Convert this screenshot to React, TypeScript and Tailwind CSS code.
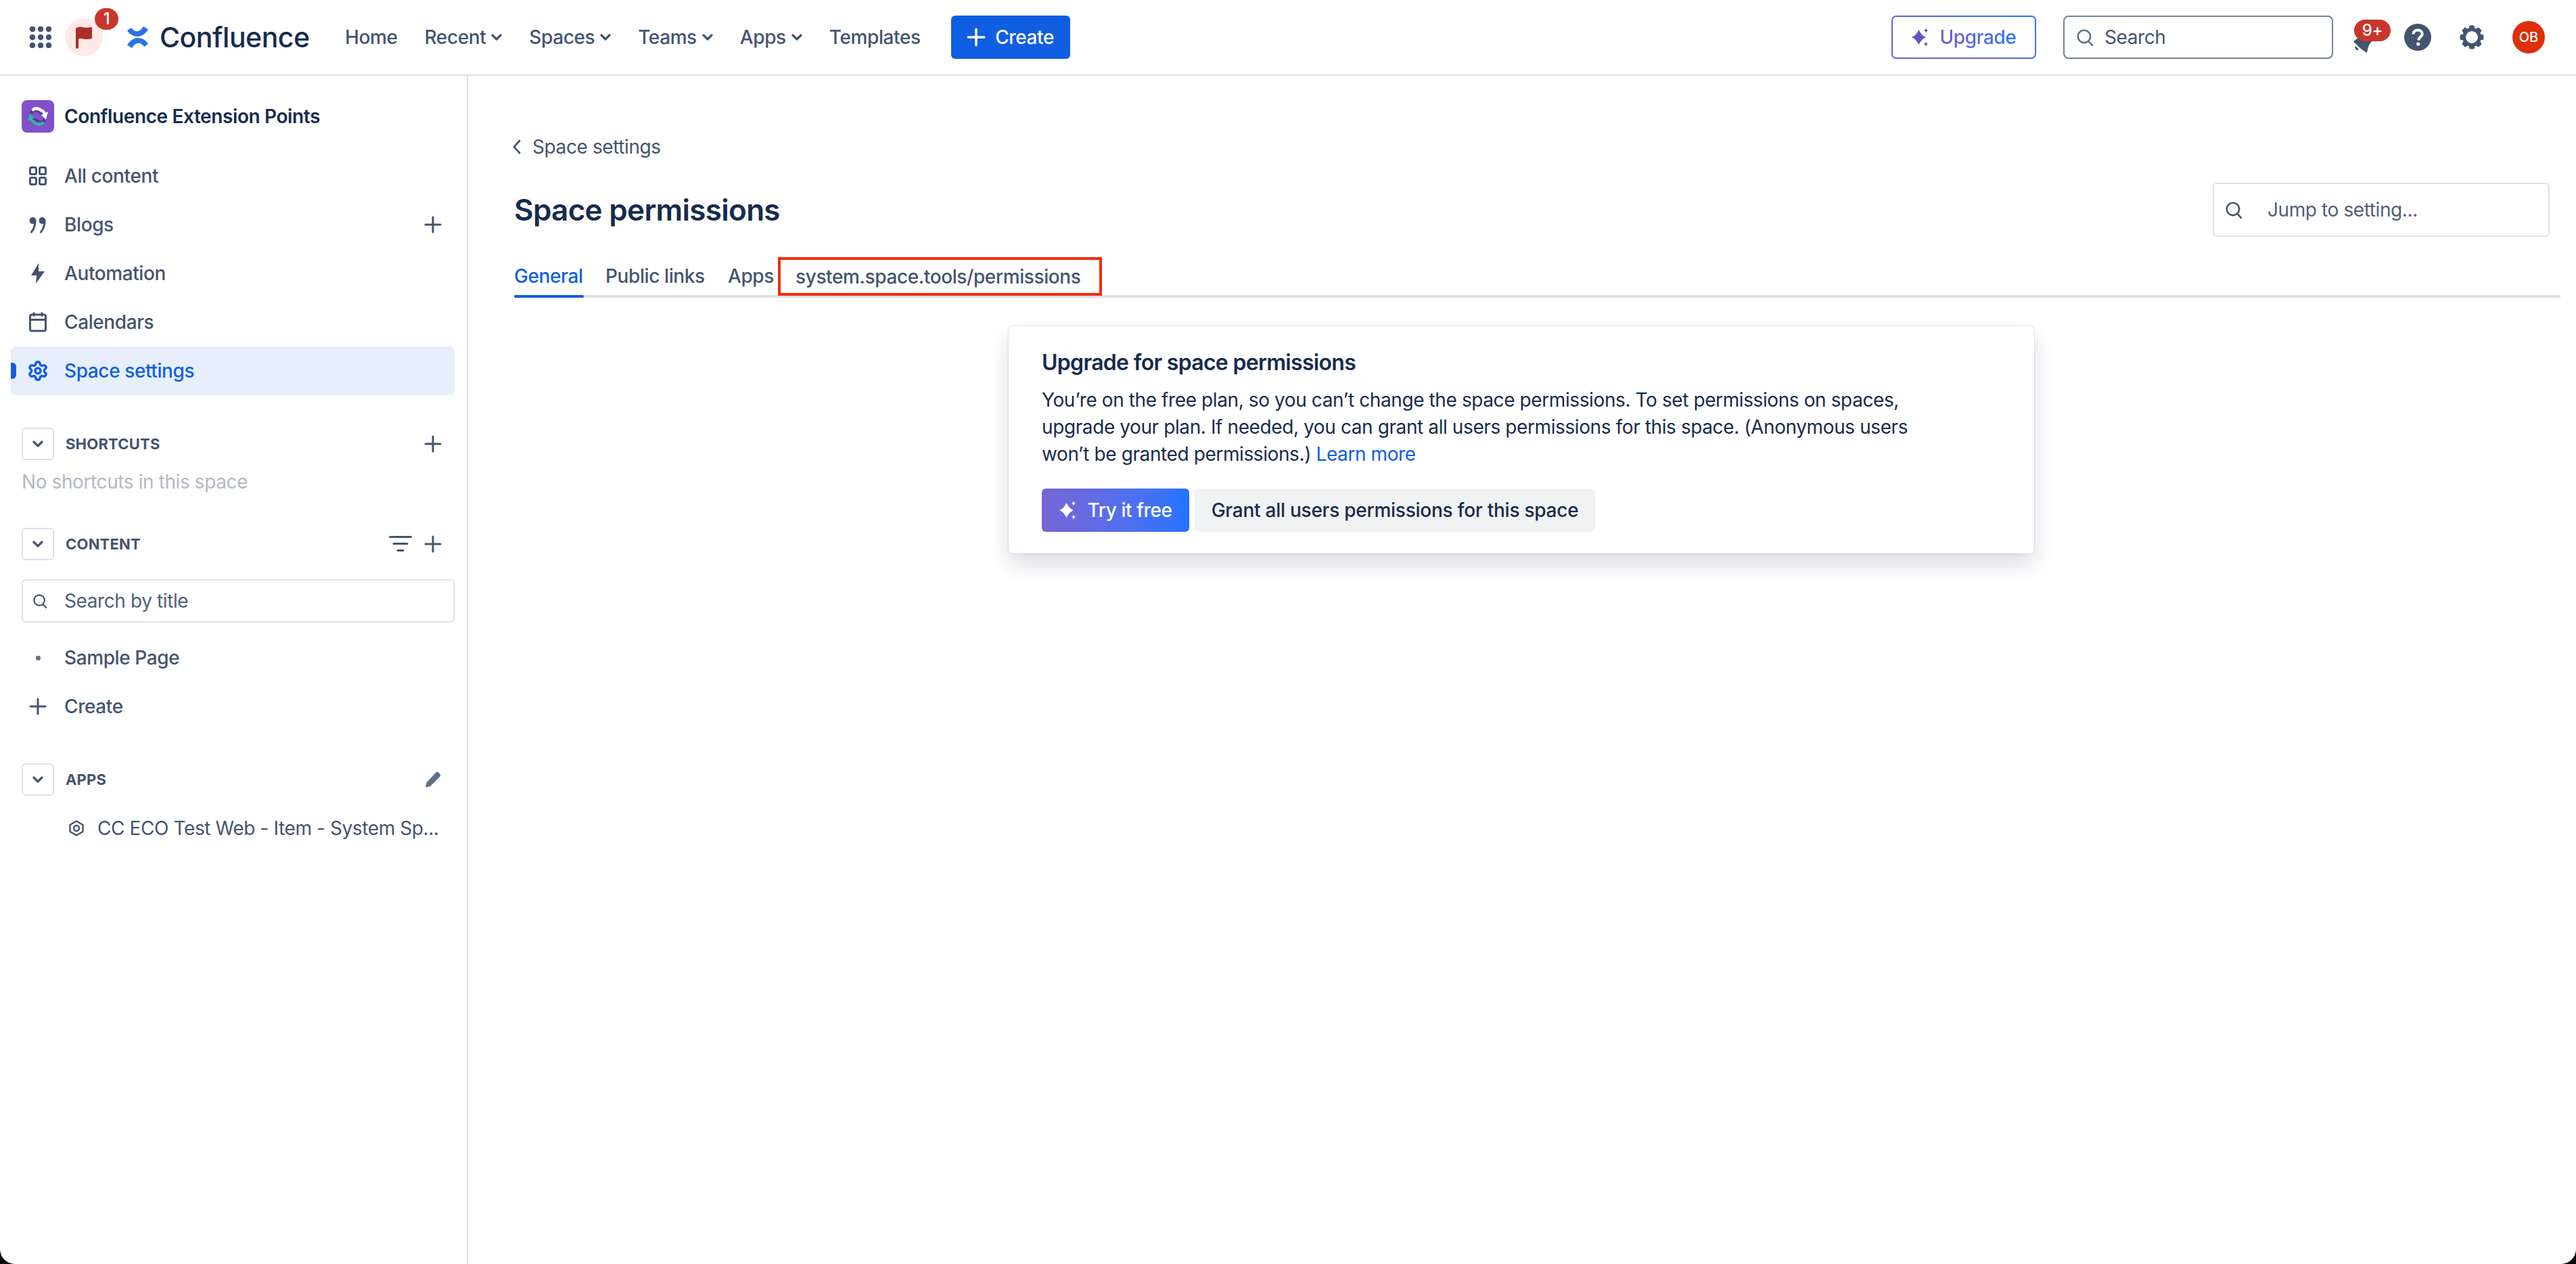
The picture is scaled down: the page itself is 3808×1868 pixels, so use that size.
import type { ReactNode } from 'react';
import { Settings } from 'lucide-react';

function PlusIcon({ className = 'h-[32px] w-[32px] text-[#44546f]' }: { className?: string }) {
  return (
    <svg viewBox="0 0 32 32" fill="none" stroke="currentColor" strokeWidth="3" strokeLinecap="round" className={className}>
      <path d="M16 5v22M5 16h22" />
    </svg>
  );
}

function ChevronDown({ className = 'h-[16px] w-[16px] text-[#44546f]' }: { className?: string }) {
  return (
    <svg viewBox="0 0 16 16" fill="none" stroke="currentColor" strokeWidth="3.2" strokeLinecap="round" strokeLinejoin="round" className={className}>
      <path d="M2 5 8 11l6-6" />
    </svg>
  );
}

function SearchIcon({ className }: { className?: string }) {
  return (
    <svg viewBox="0 0 24 24" fill="none" stroke="currentColor" strokeWidth="2.4" strokeLinecap="round" className={className}>
      <circle cx="11" cy="11" r="8.5" />
      <path d="m17 17.5 5 5.5" />
    </svg>
  );
}

function Sparkles({ className }: { className?: string }) {
  return (
    <svg viewBox="0 0 28 28" fill="currentColor" className={className}>
      <path d="M10.500 3C13 8 16 12 21 14 16 16 13 20 10.500 25 8 20 5 16 0 14 5 12 8 8 10.500 3z" />
      <path d="M21 0c.5 2.600 1.300 3.500 3.500 4-2.200.5-3 1.400-3.500 4-.5-2.600-1.300-3.500-3.500-4C19.700 3.500 20.500 2.600 21 0z" />
      <path d="M21 20c.5 2.600 1.300 3.500 3.500 4-2.200.5-3 1.400-3.500 4-.5-2.600-1.300-3.500-3.500-4 2.200-.5 3-1.400 3.500-4z" />
    </svg>
  );
}

function Gear({ className }: { className?: string }) {
  return (
    <svg viewBox="0 0 36 36" fill="currentColor" className={className}>
      <circle cx="18" cy="18" r="11.500" fill="none" stroke="currentColor" strokeWidth="5" />
      {[0, 45, 90, 135, 180, 225, 270, 315].map((a) => (
        <rect key={a} x="14" y="0.500" width="8" height="7" rx="2" transform={`rotate(${a} 18 18)`} />
      ))}
    </svg>
  );
}

function NavItem({ label, caret }: { label: string; caret?: boolean }) {
  return (
    <div className="flex items-center gap-[8px] text-[28px] font-medium text-[#44546f]">
      <span>{label}</span>
      {caret && <ChevronDown />}
    </div>
  );
}

function TopBar() {
  return (
    <header className="flex h-[112px] shrink-0 items-center border-b-2 border-[#dfe1e6] pl-[43px] pr-[46px]">
      <svg viewBox="0 0 33 32" fill="#44546f" className="h-[32px] w-[33px]">
        {[5, 17, 29].flatMap((cx) =>
          [4, 16, 28].map((cy) => <circle key={`${cx}-${cy}`} cx={cx} cy={cy} r="4.300" />),
        )}
      </svg>
      <div className="relative ml-[20px] flex h-[56px] w-[56px] items-center justify-center rounded-full bg-[#ffe9e7]">
        <svg viewBox="0 0 24 33" fill="#ae2e24" className="h-[33px] w-[24px]">
          <path d="M0 3C3 .8 6 .5 10 1.200c4 .8 8 1 13-.2.700 0 1 .4 1 1v15c0 .6-.2 1-.8 1.200-4.200 1.100-8.200 1-12.200.2-3.500-.6-5.500-.5-7 .2V31a2 2 0 0 1-4 0z" />
        </svg>
        <span className="absolute -top-[15px] left-[44px] flex h-[32px] w-[35px] items-center justify-center rounded-full bg-[#c9372c] text-[24px] font-medium text-white">
          1
        </span>
      </div>
      <svg viewBox="0 0 33 32" fill="#2b72e8" className="ml-[35px] h-[32px] w-[33px]">
        <path d="M1 6 7 2c3 4 6 6 10 5 4-1 6-4 8-7l7 4.500C29 9 25 14 17 15 10 15.500 4 11 1 6z" />
        <path d="M32 26l-6 4c-3-4-6-6-10-5-4 1-6 4-8 7L1 27.500C4 23 8 18 16 17c7-.5 13 4 16 9z" />
      </svg>
      <span className="ml-[16px] w-[220px] text-[41px] font-medium leading-none tracking-[-0.5px] text-[#172b4d]">
        Confluence
      </span>
      <nav className="ml-[54px] flex items-center gap-[40px]">
        <NavItem label="Home" />
        <NavItem label="Recent" caret />
        <NavItem label="Spaces" caret />
        <NavItem label="Teams" caret />
        <NavItem label="Apps" caret />
        <NavItem label="Templates" />
      </nav>
      <button className="ml-[45px] flex h-[64px] w-[176px] items-center justify-center gap-[14px] rounded-[6px] bg-[#105ee2] text-[28px] font-medium text-white">
        <svg viewBox="0 0 24 24" fill="none" stroke="currentColor" strokeWidth="3" strokeLinecap="round" className="h-[28px] w-[28px]">
          <path d="M12 2v20M2 12h20" />
        </svg>
        Create
      </button>

      <div className="ml-auto flex items-center">
        <div className="rounded-[7px] bg-gradient-to-tr from-[#6f5bd0] to-[#1f74ff] p-[2px]">
          <div className="flex h-[60px] w-[210px] items-center justify-center gap-[14px] rounded-[5px] bg-white">
            <Sparkles className="h-[28px] w-[28px] text-[#6554c0]" />
            <span className="bg-gradient-to-r from-[#6f5bd0] to-[#1f74ff] bg-clip-text text-[28px] font-medium text-transparent">
              Upgrade
            </span>
          </div>
        </div>
        <div className="ml-[40px] flex h-[64px] w-[399px] items-center gap-[16px] rounded-[8px] border-2 border-[#758195] pl-[17px]">
          <SearchIcon className="h-[26px] w-[26px] text-[#626f86]" />
          <span className="text-[28px] text-[#44546f]">Search</span>
        </div>
        <div className="relative ml-[28px] h-[52px] w-[60px]">
          <svg viewBox="0 0 34 26" fill="#44546f" className="absolute left-0 top-[24px] h-[26px] w-[34px]">
            <path d="M2 8 12 1l20 6c-5 2-8 6-10 18-6-3-12-8-20-17z" />
            <path d="M5 15l5 5-3 1.500-3-4z" />
          </svg>
          <span className="absolute left-[3px] top-0 flex h-[32px] w-[54px] items-center justify-center rounded-full bg-[#c9372c] text-[24px] font-medium text-white">
            9+
          </span>
        </div>
        <svg viewBox="0 0 40 40" className="ml-[17px] h-[40px] w-[40px]">
          <circle cx="20" cy="20" r="20" fill="#44546f" />
          <path d="M13.500 15.500c0-3.800 3-6 6.700-6 3.700 0 6.500 2.200 6.500 5.500 0 4.800-5.500 4.500-5.500 9.500" fill="none" stroke="#fff" strokeWidth="4" />
          <circle cx="20.700" cy="30" r="2.600" fill="#fff" />
        </svg>
        <Gear className="ml-[42px] h-[36px] w-[36px] text-[#44546f]" />
        <div className="ml-[42px] flex h-[48px] w-[48px] items-center justify-center rounded-full bg-[#dc2f0a] text-[20px] font-medium tracking-normal text-white">
          OB
        </div>
      </div>
    </header>
  );
}

function SpaceLogo() {
  return (
    <svg viewBox="0 0 48 48" className="h-[48px] w-[48px] shrink-0">
      <rect width="48" height="48" rx="8" fill="#8250c8" />
      <path d="M14 28c-3-6 .5-13 6-13s7 6 12 3" fill="none" stroke="#5b3a9e" strokeWidth="5" strokeLinecap="round" />
      <path d="M34 20c3 6-.5 13-6 13s-7-6-12-3" fill="none" stroke="#5b3a9e" strokeWidth="5" strokeLinecap="round" />
      <path d="M17 14c4-3 9-1 12 1 3 1.500 5 4 5 6" fill="none" stroke="#fff" strokeWidth="4.500" strokeLinecap="round" />
      <path d="m39 17-3 12-7-7z" fill="#fff" />
      <path d="M31 34c-4 3-9 1-12-1-3-1.500-5-4-5-6" fill="none" stroke="#36b3a8" strokeWidth="4.500" strokeLinecap="round" />
      <path d="m9 31 3-12 7 7z" fill="#36b3a8" />
    </svg>
  );
}

function SideRow({ icon, label, active, action }: { icon: ReactNode; label: string; active?: boolean; action?: ReactNode }) {
  return (
    <div className={`relative ml-[16px] mr-[18px] flex h-[72px] items-center rounded-[8px] ${active ? 'bg-[#e7effc] text-[#105ee2]' : 'text-[#44546f]'}`}>
      {active && <span className="absolute left-0 top-[24px] h-[24px] w-[8px] rounded-r-[6px] bg-[#105ee2]" />}
      <div className="ml-[16px] flex w-[48px] items-center justify-center">{icon}</div>
      <span className="ml-[15px] text-[28px] font-medium">{label}</span>
      {action && <div className="ml-auto mr-[16px] flex">{action}</div>}
    </div>
  );
}

function SectionHeader({ title, className, children }: { title: string; className: string; children?: ReactNode }) {
  return (
    <div className={`ml-[32px] mr-[18px] flex h-[48px] items-center pr-[16px] ${className}`}>
      <div className="flex h-[48px] w-[48px] items-center justify-center rounded-[6px] border-2 border-[#dfe1e6]">
        <ChevronDown />
      </div>
      <span className="ml-[17px] text-[22px] font-bold tracking-[0.2px] text-[#44546f]">{title}</span>
      <div className="ml-auto flex items-center gap-[15px]">{children}</div>
    </div>
  );
}

function Sidebar() {
  const glyph = 'h-[32px] w-[32px] text-[#44546f]';
  return (
    <aside className="w-[692px] shrink-0 border-r-2 border-[#dfe1e6] pt-[36px]">
      <div className="ml-[32px] flex items-center gap-[15px]">
        <SpaceLogo />
        <span className="text-[28px] font-semibold text-[#172b4d]">Confluence Extension Points</span>
      </div>
      <div className="mt-[28px]">
        <SideRow
          label="All content"
          icon={
            <svg viewBox="0 0 32 32" fill="none" stroke="currentColor" strokeWidth="3" className={glyph}>
              <rect x="4.500" y="3.500" width="9" height="10" rx="2" />
              <rect x="18.500" y="3.500" width="9" height="10" rx="2" />
              <rect x="4.500" y="18.500" width="9" height="10" rx="2" />
              <rect x="18.500" y="18.500" width="9" height="10" rx="2" />
            </svg>
          }
        />
        <SideRow
          label="Blogs"
          action={<PlusIcon />}
          icon={
            <svg viewBox="0 0 32 32" fill="currentColor" className={glyph}>
              {[0, 14].map((dx) => (
                <g key={dx} transform={`translate(${dx} 0)`}>
                  <circle cx="8.500" cy="10" r="5" />
                  <path d="M12 10c0 7-1.500 12-5.500 17" fill="none" stroke="currentColor" strokeWidth="3" strokeLinecap="round" />
                </g>
              ))}
            </svg>
          }
        />
        <SideRow
          label="Automation"
          icon={
            <svg viewBox="0 0 32 32" fill="currentColor" className={glyph}>
              <path d="M17 1v12h9L13 31l1-12H6z" />
            </svg>
          }
        />
        <SideRow
          label="Calendars"
          icon={
            <svg viewBox="0 0 32 32" fill="none" stroke="currentColor" strokeWidth="3" className={glyph}>
              <rect x="4.500" y="5" width="23" height="24" rx="2.500" />
              <path d="M4.500 12.500h23M10 1.500v6M22 1.500v6" />
            </svg>
          }
        />
        <SideRow label="Space settings" active icon={<Settings strokeWidth={2.6} className="h-[32px] w-[32px] text-[#105ee2]" />} />
      </div>

      <SectionHeader title="SHORTCUTS" className="mt-[48px]">
        <PlusIcon />
      </SectionHeader>
      <p className="ml-[32px] mt-[16px] text-[28px] leading-[32px] text-[#b3b9c4]">No shortcuts in this space</p>

      <SectionHeader title="CONTENT" className="mt-[52px]">
        <svg viewBox="0 0 34 24" fill="none" stroke="#44546f" strokeWidth="3" strokeLinecap="round" className="h-[24px] w-[34px]">
          <path d="M1.500 1.500h31M7 11.500h20M13 21.500h8" />
        </svg>
        <PlusIcon />
      </SectionHeader>
      <div className="ml-[32px] mr-[18px] mt-[28px] flex h-[64px] items-center rounded-[6px] border-2 border-[#dfe1e6]">
        <SearchIcon className="ml-[14px] h-[22px] w-[22px] text-[#44546f]" />
        <span className="ml-[25px] text-[28px] text-[#505f79]">Search by title</span>
      </div>
      <div className="mt-[16px]">
        <SideRow
          label="Sample Page"
          icon={<span className="h-[7px] w-[7px] rounded-full bg-[#626f86]" />}
        />
        <SideRow label="Create" icon={<PlusIcon />} />
      </div>

      <SectionHeader title="APPS" className="mt-[48px]">
        <svg viewBox="0 0 24 24" fill="#626f86" className="mr-[4px] h-[24px] w-[24px]">
          <path d="M16.500 1.500c1-1 2.500-1 3.500 0l2.500 2.500c1 1 1 2.500 0 3.500L8 22l-6 1.500-1-1 1.500-6z" />
        </svg>
      </SectionHeader>
      <div className="mx-[16px] mt-[12px] flex h-[72px] items-center pl-[85px] text-[#44546f]">
        <svg viewBox="0 0 24 24" fill="none" stroke="currentColor" strokeWidth="2.400" strokeLinejoin="round" className="h-[24px] w-[24px] shrink-0">
          <path d="M12 1.500 21.500 7v10L12 22.500 2.500 17V7z" />
          <circle cx="12" cy="12" r="4" />
        </svg>
        <span className="ml-[19px] whitespace-nowrap text-[28px]">CC ECO Test Web - Item - System Sp...</span>
      </div>
    </aside>
  );
}

function Main() {
  return (
    <main className="min-w-0 flex-1 pl-[68px] pr-[23px] pt-[89px]">
      <div className="flex h-[32px] items-center gap-[16px] text-[28px] text-[#44546f]">
        <svg viewBox="0 0 14 22" fill="none" stroke="currentColor" strokeWidth="2.800" strokeLinecap="round" strokeLinejoin="round" className="ml-[-3px] h-[22px] w-[14px]">
          <path d="M11 2 3 11l8 9" />
        </svg>
        Space settings
      </div>
      <div className="mr-[16px] mt-[37px] flex h-[80px] items-center justify-between">
        <h1 className="text-[44px] font-semibold tracking-[-0.7px] text-[#172b4d]">Space permissions</h1>
        <div className="flex h-[80px] w-[498px] items-center rounded-[6px] border-2 border-[#dfe1e6]">
          <SearchIcon className="ml-[16px] h-[26px] w-[26px] text-[#44546f]" />
          <span className="ml-[37px] text-[28px] text-[#505f79]">Jump to setting...</span>
        </div>
      </div>
      <div className="mt-[30px] flex h-[60px] border-b-4 border-[#dcdfe4] text-[28px] font-medium text-[#44546f]">
        <div className="relative flex h-[56px] w-[103px] items-center text-[#105ee2]">
          General
          <span className="absolute bottom-[-4px] left-0 h-[4px] w-full rounded-full bg-[#105ee2]" />
        </div>
        <div className="ml-[32px] flex h-[56px] w-[148px] items-center">Public links</div>
        <div className="ml-[33px] flex h-[56px] w-[67px] items-center">Apps</div>
        <div className="ml-[7px] flex h-[57px] w-[479px] items-center border-4 border-[#f52a0a] pl-[22px]">
          system.space.tools/permissions
        </div>
      </div>

      <section className="ml-[731px] mt-[42px] h-[336px] w-[1516px] rounded-[6px] bg-white pl-[49px] pt-[34px] text-[#172b4d] shadow-[0_16px_32px_rgba(9,30,66,0.15),0_0_2px_rgba(9,30,66,0.31)]">
        <h2 className="text-[32px] font-semibold leading-[40px] tracking-[-0.7px]">Upgrade for space permissions</h2>
        <p className="mt-[15px] w-[1300px] text-[28px] leading-[40px]">
          You’re on the free plan, so you can’t change the space permissions. To set permissions on spaces, upgrade your plan. If needed, you can grant all users permissions for this space. (Anonymous users won’t be granted permissions.){' '}
          <span className="text-[#105ee2]">Learn more</span>
        </p>
        <div className="mt-[31px] flex gap-[8px]">
          <button className="flex h-[64px] w-[218px] items-center justify-center gap-[14px] rounded-[6px] bg-gradient-to-r from-[#7566d6] to-[#1f74ff] text-[28px] font-medium text-white">
            <Sparkles className="h-[28px] w-[28px]" />
            Try it free
          </button>
          <button className="flex h-[64px] w-[592px] items-center justify-center rounded-[6px] bg-[#f1f2f4] text-[28px] font-medium tracking-[-0.25px]">
            Grant all users permissions for this space
          </button>
        </div>
      </section>
    </main>
  );
}

export default function App() {
  return (
    <div className="h-[1868px] w-[3808px] overflow-hidden bg-black font-['Inter',sans-serif] tracking-[-0.4px]">
      <div className="flex h-full flex-col overflow-hidden rounded-b-[22px] bg-white">
        <TopBar />
        <div className="flex min-h-0 flex-1">
          <Sidebar />
          <Main />
        </div>
      </div>
    </div>
  );
}
